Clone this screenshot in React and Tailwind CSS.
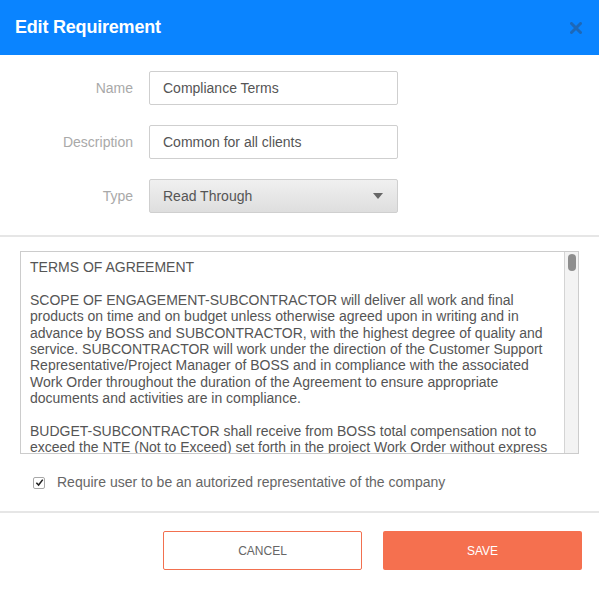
import React from 'react'

const Field = ({ label, children }) => (
  <div className="flex items-center h-[34px]">
    <label className="w-[149px] shrink-0 pr-[16px] text-right text-[14px] text-[#a9a9a9]">{label}</label>
    {children}
  </div>
)

const App = () => {
  return (
    <div className="w-[599px] h-[601px] bg-white text-[#555]" style={{ fontFamily: '"Liberation Sans", Arial, sans-serif' }}>
      {/* header */}
      <div className="h-[55px] bg-[#0a84ff] flex items-center justify-between pl-[15px] pr-[17px]">
        <h1 className="text-white text-[18px] font-bold tracking-[-0.2px]">Edit Requirement</h1>
        <svg width="12" height="12" viewBox="0 0 12 12">
          <path d="M1.5 1.5 L10.5 10.5 M10.5 1.5 L1.5 10.5" stroke="#1d68b8" strokeWidth="3" strokeLinecap="round" />
        </svg>
      </div>

      {/* form */}
      <div className="pt-[16px] flex flex-col gap-[20px] pb-[22px]">
        <Field label="Name">
          <input
            defaultValue="Compliance Terms"
            className="w-[249px] h-[34px] border border-[#cfcfcf] rounded-[2px] px-[13px] text-[14px] text-[#555] outline-none"
          />
        </Field>
        <Field label="Description">
          <input
            defaultValue="Common for all clients"
            className="w-[249px] h-[34px] border border-[#cfcfcf] rounded-[2px] px-[13px] text-[14px] text-[#555] outline-none"
          />
        </Field>
        <Field label="Type">
          <div className="w-[249px] h-[34px] border border-[#cfcfcf] rounded-[2px] px-[13px] text-[14px] text-[#555] flex items-center justify-between bg-gradient-to-b from-[#f0f0f0] to-[#dedede]">
            <span>Read Through</span>
            <span className="w-0 h-0 border-l-[5px] border-r-[5px] border-t-[6px] border-l-transparent border-r-transparent border-t-[#666] mr-[1px]"></span>
          </div>
        </Field>
      </div>

      <div className="h-[2px] bg-[#e6e6e6]"></div>

      {/* terms */}
      <div className="px-[20px] pt-[14px]">
        <div className="h-[203px] border border-[#cccccc] flex overflow-hidden">
          <div className="flex-1 pl-[9px] pr-[8px] pt-[7px] text-[14px] leading-[16.4px] text-[#555]">
            <p className="mb-[16.4px]">TERMS OF AGREEMENT</p>
            <p className="mb-[16.4px]">
              SCOPE OF ENGAGEMENT-SUBCONTRACTOR will deliver all work and final products on time and on budget unless otherwise agreed upon in writing and in advance by BOSS and SUBCONTRACTOR, with the highest degree of quality and service. SUBCONTRACTOR will work under the direction of the Customer Support Representative/Project Manager of BOSS and in compliance with the associated Work Order throughout the duration of the Agreement to ensure appropriate documents and activities are in compliance.
            </p>
            <p>
              BUDGET-SUBCONTRACTOR shall receive from BOSS total compensation not to exceed the NTE (Not to Exceed) set forth in the project Work Order without express written approval.
            </p>
          </div>
          <div className="w-[14px] border-l border-[#d4d4d4] bg-[#f3f3f3] flex justify-center pt-[2px]">
            <div className="w-[8px] h-[17px] rounded-full bg-[#8e8e8e]"></div>
          </div>
        </div>
      </div>

      {/* checkbox */}
      <div className="flex items-center pl-[33px] pt-[18px] pb-[18px]">
        <div className="w-[12px] h-[12px] border border-[#a8a8a8] rounded-[2px] flex items-center justify-center bg-white">
          <svg width="9" height="9" viewBox="0 0 10 10">
            <path d="M1.5 5.2 L4 7.8 L8.6 1.8" fill="none" stroke="#222" strokeWidth="1.7" />
          </svg>
        </div>
        <span className="ml-[12px] text-[14px] text-[#666]">Require user to be an autorized representative of the company</span>
      </div>

      <div className="h-[2px] bg-[#e6e6e6]"></div>

      {/* footer */}
      <div className="flex justify-end gap-[21px] pt-[18px] pr-[17px]">
        <button className="w-[199px] h-[39px] border border-[#f2704f] rounded-[2px] bg-white text-[12px] text-[#666] uppercase">Cancel</button>
        <button className="w-[199px] h-[39px] rounded-[2px] bg-[#f5704f] text-[12px] text-white uppercase">Save</button>
      </div>
    </div>
  )
}

export default App
